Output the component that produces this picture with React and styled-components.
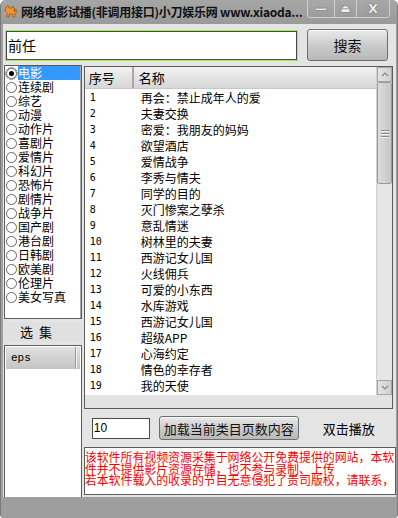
import React from 'react';
import styled, { createGlobalStyle } from 'styled-components';

const GlobalStyle = createGlobalStyle`
  html, body { margin: 0; padding: 0; background: #ffffff; }
  body { font-family: "Noto Sans CJK SC", "DejaVu Sans", sans-serif; font-size: 12px; color: #000; }
  * { box-sizing: border-box; }
`;

const CJK = `"Noto Sans CJK SC", "DejaVu Sans", sans-serif`;

const Window = styled.div`
  width: 398px;
  height: 518px;
  display: flex;
  flex-direction: column;
  background: #a0a0a0;
  border-left: 1px solid #7a7a7a;
  border-right: 1px solid #7a7a7a;
  border-radius: 6px 6px 4px 4px;
  overflow: hidden;
`;

const TitleBar = styled.div`
  height: 24px;
  flex: none;
  display: flex;
  align-items: flex-start;
  padding-left: 2px;
  background: linear-gradient(#a6a6a6, #9a9a9a);
`;

const AppIcon = styled.svg`
  width: 16px;
  height: 16px;
  margin-top: 4px;
  flex: none;
`;

const TitleText = styled.div`
  flex: 1;
  min-width: 0;
  margin-left: 2px;
  margin-top: 4px;
  font-family: ${CJK};
  font-size: 12px;
  font-weight: bold;
  line-height: 16px;
  white-space: nowrap;
  letter-spacing: -0.25px;
  color: #111;
`;

const WinButtons = styled.div`
  flex: none;
  margin-right: 7px;
  display: flex;
  height: 18px;
  border: 1px solid #cfcfcf;
  border-top: none;
  border-radius: 0 0 4px 4px;
  overflow: hidden;
`;

const WinButton = styled.div`
  width: ${p => p.$w}px;
  display: flex;
  align-items: center;
  justify-content: center;
  border-left: ${p => (p.$first ? 'none' : '1px solid #cfcfcf')};
  color: #ececec;
  font-family: "DejaVu Sans", sans-serif;
  font-weight: bold;
  font-size: ${p => p.$fs || 12}px;
  text-shadow: 0 0 1px #555, 0 0 1px #555;
  background: linear-gradient(#a9a9a9, #9c9c9c);
`;

const Body = styled.div`
  height: 473px;
  flex: none;
  margin: 0 1px 0 2px;
  background: #e4e4e4;
  display: flex;
  flex-direction: column;
`;

const SearchRow = styled.div`
  display: flex;
  align-items: flex-start;
  padding: 5px 0 0 2px;
  gap: 9px;
`;

const SearchInput = styled.div`
  width: 293px;
  height: 31px;
  margin-top: 1px;
  border: 1px solid #9cf03c;
  background: #fff;
  box-shadow: inset 0 0 0 1px #4a4a4a;
  font-family: ${CJK};
  font-size: 14px;
  line-height: 29px;
  padding-left: 2px;
`;

const Button = styled.div`
  width: ${p => p.$w}px;
  height: ${p => p.$h}px;
  margin-left: ${p => p.$ml || 0}px;
  border: 1px solid #6e6e6e;
  border-radius: 3px;
  background: linear-gradient(#eaeaea, #c9c9c9 55%, #b9b9b9);
  box-shadow: inset 0 1px 0 #f8f8f8;
  display: flex;
  align-items: center;
  justify-content: center;
  font-family: ${CJK};
  font-size: ${p => p.$fs}px;
  color: #111;
`;

const Main = styled.div`
  display: flex;
  gap: 2px;
  margin-top: 4px;
  flex: 1;
  min-height: 0;
`;

const LeftCol = styled.div`
  width: 78px;
  display: flex;
  flex-direction: column;
  margin-left: 1px;
`;

const CatList = styled.div`
  height: 254px;
  background: #fff;
  border: 1px solid #5c5c5c;
  box-shadow: inset -1px 0 0 #a8a8a8;
`;

const CatItem = styled.div`
  height: 14px;
  display: flex;
  align-items: center;
`;

const Radio = styled.div`
  width: 11px;
  height: 11px;
  margin: 0 1px 0 1px;
  border-radius: 50%;
  border: 1px solid #666;
  background: #fff;
  display: flex;
  align-items: center;
  justify-content: center;
  flex: none;
  outline: ${p => (p.$on ? '1px dotted #444' : 'none')};
  &::after {
    content: '';
    display: ${p => (p.$on ? 'block' : 'none')};
    width: 5px;
    height: 5px;
    border-radius: 50%;
    background: #000;
  }
`;

const CatLabel = styled.div`
  flex: 1;
  height: 14px;
  margin-right: 1px;
  font-family: ${CJK};
  font-size: 12px;
  line-height: 14px;
  white-space: nowrap;
  background: ${p => (p.$on ? '#3399ff' : 'transparent')};
  color: ${p => (p.$on ? '#fff' : '#000')};
`;

const SectionLabel = styled.div`
  height: 20px;
  margin-top: 3px;
  background: #e0e0e0;
  font-family: ${CJK};
  font-size: 13px;
  line-height: 20px;
  padding-left: 16px;
  letter-spacing: 6px;
`;

const EpsBox = styled.div`
  flex: 1;
  margin-top: 3px;
  background: #fff;
  border: 1px solid #5c5c5c;
  border-bottom: none;
  padding: 1px 1px 0 1px;
`;

const EpsHeader = styled.div`
  height: 22px;
  display: flex;
`;

const EpsHeadCell = styled.div`
  width: 70px;
  background: linear-gradient(#e0e0e0, #c4c4c4);
  border-right: 1px solid #999;
  font-family: "Liberation Mono", monospace;
  font-size: 11px;
  line-height: 22px;
  padding-left: 5px;
`;

const EpsHeadRest = styled.div`
  flex: 1;
  background: linear-gradient(#e0e0e0, #c4c4c4);
  border-left: 1px solid #f2f2f2;
`;

const RightCol = styled.div`
  width: 313px;
  display: flex;
  flex-direction: column;
`;

const Table = styled.div`
  height: 343px;
  margin-right: 3px;
  margin-top: 1px;
  border: 1px solid #5c5c5c;
  background: #e3e3e3;
  display: flex;
  flex-direction: column;
`;

const TableTop = styled.div`
  height: 328px;
  display: flex;
`;

const Grid = styled.div`
  flex: 1;
  background: #fff;
  display: flex;
  flex-direction: column;
`;

const HeadRow = styled.div`
  height: 22px;
  display: flex;
  background: linear-gradient(#f2f2f2, #d6d6d6);
  border-bottom: 1px solid #c8c8c8;
`;

const HeadCell = styled.div`
  width: ${p => (p.$w ? `${p.$w}px` : 'auto')};
  flex: ${p => (p.$w ? 'none' : '1')};
  font-family: ${CJK};
  font-size: 13px;
  line-height: 21px;
  padding-left: ${p => p.$pl}px;
  border-right: ${p => (p.$sep ? '2px solid #a8a8a8' : 'none')};
`;

const Row = styled.div`
  height: 16px;
  display: flex;
  align-items: center;
`;

const NumCell = styled.div`
  width: 56px;
  padding-left: 5px;
  font-family: "DejaVu Sans Mono", monospace;
  font-size: 10px;
  flex: none;
`;

const NameCell = styled.div`
  flex: 1;
  font-family: ${CJK};
  font-size: 12px;
  white-space: nowrap;
`;

const VScroll = styled.div`
  width: 16px;
  display: flex;
  flex-direction: column;
  background: #e6e6e6;
  border-left: 1px solid #d0d0d0;
`;

const ScrollBtn = styled.div`
  height: 15px;
  flex: none;
  border: 1px solid #a4a4a4;
  background: linear-gradient(90deg, #e4e4e4, #cfcfcf);
  display: flex;
  align-items: center;
  justify-content: center;
`;

const Thumb = styled.div`
  height: 102px;
  flex: none;
  border: 1px solid #9a9a9a;
  border-radius: 2px;
  background: linear-gradient(90deg, #dcdcdc, #c6c6c6);
  display: flex;
  flex-direction: column;
  align-items: center;
  justify-content: center;
  gap: 2px;
`;

const Grip = styled.div`
  width: 8px;
  height: 1px;
  background: #8a8a8a;
  box-shadow: 0 1px 0 #f4f4f4;
`;

const Track = styled.div`
  flex: 1;
`;

const Controls = styled.div`
  height: 24px;
  margin-top: 7px;
  display: flex;
  align-items: center;
  padding-left: 8px;
`;

const NumInput = styled.div`
  width: 58px;
  height: 21px;
  background: #fff;
  border: 1px solid #4a4a4a;
  font-family: "Liberation Sans", sans-serif;
  font-size: 12px;
  line-height: 19px;
  padding-left: 1px;
`;

const Hint = styled.div`
  margin-left: 24px;
  font-family: ${CJK};
  font-size: 13px;
`;

const Notice = styled.div`
  height: 48px;
  margin-top: 7px;
  background: #fff;
  border: 1px solid #5c5c5c;
  color: #ff0000;
  font-family: ${CJK};
  font-size: 12px;
  line-height: 11.5px;
  letter-spacing: -0.1px;
  padding: 3px 0 0 0;
  overflow: hidden;
`;

const BottomFrame = styled.div`
  flex: 1;
  background: #9e9e9e;
`;

const categories = ['电影', '连续剧', '综艺', '动漫', '动作片', '喜剧片', '爱情片', '科幻片', '恐怖片', '剧情片', '战争片', '国产剧', '港台剧', '日韩剧', '欧美剧', '伦理片', '美女写真'];

const movies = ['再会：禁止成年人的爱', '夫妻交换', '密爱：我朋友的妈妈', '欲望酒店', '爱情战争', '李秀与情夫', '同学的目的', '灭门惨案之孽杀', '意乱情迷', '树林里的夫妻', '西游记女儿国', '火线佣兵', '可爱的小东西', '水库游戏', '西游记女儿国', '超级APP', '心海约定', '情色的幸存者', '我的天使'];

export default function App() {
  return (
    <>
      <GlobalStyle />
      <Window>
        <TitleBar>
          <AppIcon viewBox="0 0 16 16">
            <path d="M3 3 L5 1 L6 4 L9 4 L10 2 L11 5 L13 5 L14 8 L12 9 L12 13 L10 13 L10 10 L6 10 L6 13 L4 13 L4 9 L2 8 Z" fill="#f0962c" stroke="#a35a12" strokeWidth="0.8" />
            <rect x="11" y="6" width="1.2" height="1.2" fill="#3a1c00" />
            <path d="M2 8 L1 11 L3 9" fill="#f7c26b" />
          </AppIcon>
          <TitleText>网络电影试播(非调用接口)小刀娱乐网 www.xiaoda...</TitleText>
          <WinButtons>
            <WinButton $w={26} $first>—</WinButton>
            <WinButton $w={22} $fs={11}>⏏</WinButton>
            <WinButton $w={33} $fs={13}>X</WinButton>
          </WinButtons>
        </TitleBar>
        <Body>
          <SearchRow>
            <SearchInput>前任</SearchInput>
            <Button $w={81} $h={32} $fs={14}>搜索</Button>
          </SearchRow>
          <Main>
            <LeftCol>
              <CatList>
                {categories.map((c, i) => (
                  <CatItem key={c}>
                    <Radio $on={i === 0} />
                    <CatLabel $on={i === 0}>{c}</CatLabel>
                  </CatItem>
                ))}
              </CatList>
              <SectionLabel>选集</SectionLabel>
              <EpsBox>
                <EpsHeader>
                  <EpsHeadCell>eps</EpsHeadCell>
                  <EpsHeadRest />
                </EpsHeader>
              </EpsBox>
            </LeftCol>
            <RightCol>
              <Table>
                <TableTop>
                  <Grid>
                    <HeadRow>
                      <HeadCell $w={49} $pl={4} $sep>序号</HeadCell>
                      <HeadCell $pl={5}>名称</HeadCell>
                    </HeadRow>
                    {movies.map((m, i) => (
                      <Row key={i}>
                        <NumCell>{i + 1}</NumCell>
                        <NameCell>{m}</NameCell>
                      </Row>
                    ))}
                  </Grid>
                  <VScroll>
                    <ScrollBtn>
                      <svg width="8" height="5" viewBox="0 0 8 5"><path d="M1 4 L4 1 L7 4" fill="none" stroke="#888" strokeWidth="1.2" /></svg>
                    </ScrollBtn>
                    <Thumb>
                      <Grip />
                      <Grip />
                      <Grip />
                    </Thumb>
                    <Track />
                    <ScrollBtn>
                      <svg width="8" height="5" viewBox="0 0 8 5"><path d="M1 1 L4 4 L7 1" fill="none" stroke="#888" strokeWidth="1.2" /></svg>
                    </ScrollBtn>
                  </VScroll>
                </TableTop>
              </Table>
              <Controls>
                <NumInput>10</NumInput>
                <Button $w={140} $h={24} $fs={13} $ml={9}>加载当前类目页数内容</Button>
                <Hint>双击播放</Hint>
              </Controls>
              <Notice>
                该软件所有视频资源采集于网络公开免费提供的网站，本软件并不提供影片资源存储，也不参与录制、上传
                <br />
                若本软件载入的收录的节目无意侵犯了贵司版权，请联系，
              </Notice>
            </RightCol>
          </Main>
        </Body>
        <BottomFrame />
      </Window>
    </>
  );
}
